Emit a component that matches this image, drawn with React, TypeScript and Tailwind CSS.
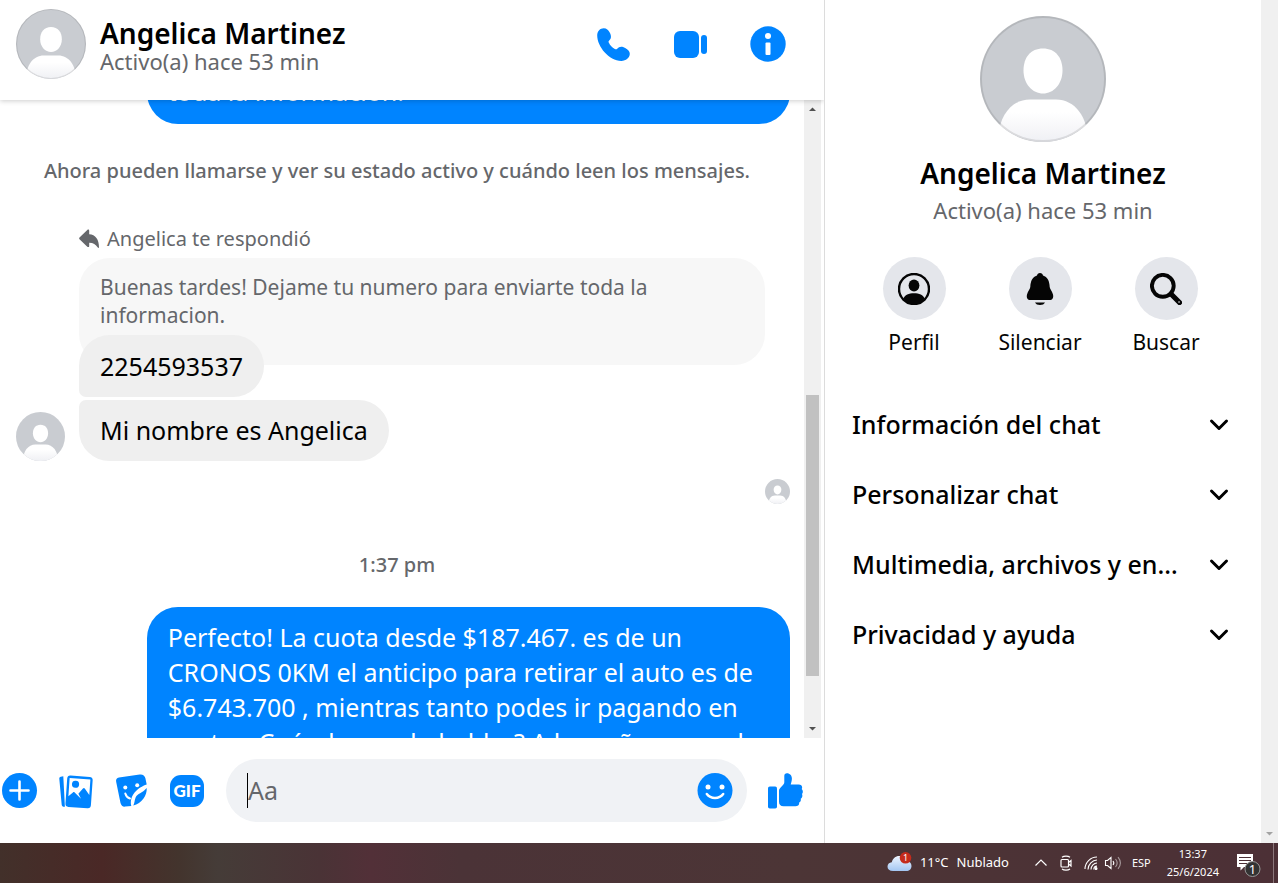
import { useId, type ReactNode } from 'react';

function Avatar({ className, ring = false }: { className: string; ring?: boolean }) {
  const id = useId();
  return (
    <svg viewBox="0 0 126 126" className={className} aria-hidden="true">
      <defs>
        <clipPath id={`${id}-clip`}>
          <circle cx="63" cy="63" r="63" />
        </clipPath>
        <linearGradient id={`${id}-body`} x1="0" y1="0" x2="0" y2="1">
          <stop offset="0.3" stopColor="#ffffff" />
          <stop offset="1" stopColor="#eff0f4" />
        </linearGradient>
      </defs>
      <g clipPath={`url(#${id}-clip)`}>
        <rect width="126" height="126" fill="#c9ccd1" />
        <path d="M63 32.500c12.500 0 19.500 9 19.500 22 0 13.500-9 23-19.500 23s-19.500-9.500-19.500-23c0-13 7-22 19.500-22z" fill="#fff" />
        <path d="M18 126C18 101 31 83.500 50 83.500h26c19 0 32 17.500 32 42.500z" fill={`url(#${id}-body)`} />
      </g>
      {ring && <circle cx="63" cy="63" r="62" fill="none" stroke="#000" strokeOpacity="0.1" strokeWidth="2" />}
    </svg>
  );
}

function Header() {
  return (
    <header className="relative z-10 flex h-[100px] shrink-0 items-start bg-white pr-[38px] pl-4 shadow-[0_1px_5px_rgba(0,0,0,0.2)]">
      <Avatar className="mt-[9px] size-[70px]" ring />
      <div className="mt-4 ml-[14px]">
        <h1 className="text-[28px] leading-[34px] font-semibold text-black">Angelica Martinez</h1>
        <p className="text-[22px] leading-[22px] text-[#65676b]">Activo(a) hace 53 min</p>
      </div>
      <div className="mt-[26px] ml-auto flex gap-[42px] text-[#0084ff]">
        <button type="button" aria-label="Llamar">
          <svg viewBox="0 0 36 36" className="size-9" fill="currentColor">
            <path d="M3.200 9.500C3.200 5 6.300 2.200 9.700 2.200c3 0 4.600 1.700 6 4.300 2 3.700 1.600 6.200-.5 7.900-.8.700-.8 1.400-.3 2.400 1.200 2.700 3.200 4.700 5.900 6.200 1 .5 1.700.5 2.400-.2 1.900-2.200 4.300-3 8-.8 2.700 1.600 4.600 3.100 4.600 5.700 0 3.800-3.800 7.200-8.500 7.200C15 34.900 3.200 20.500 3.200 9.500z" />
          </svg>
        </button>
        <button type="button" aria-label="Videollamada">
          <svg viewBox="0 0 36 36" className="size-9" fill="currentColor">
            <rect x="2" y="5" width="25" height="27" rx="6" />
            <rect x="29" y="9" width="6" height="19" rx="3" />
          </svg>
        </button>
        <button type="button" aria-label="Información">
          <svg viewBox="0 0 36 36" className="size-9">
            <circle cx="18" cy="18" r="17.700" fill="currentColor" />
            <circle cx="18" cy="10" r="3" fill="#fff" />
            <rect x="15.500" y="16.500" width="5" height="12.500" rx="1" fill="#fff" />
          </svg>
        </button>
      </div>
    </header>
  );
}

function SentBubble({ children, className }: { children: ReactNode; className: string }) {
  return (
    <div className={`mr-[14px] ml-auto w-[80%] shrink-0 rounded-[31px] bg-[#0084ff] px-[21px] pt-[13px] pb-[15px] text-[25px] leading-[35px] text-white ${className}`}>
      {children}
    </div>
  );
}

function Messages() {
  return (
    <div className="flex min-h-0 flex-1 overflow-hidden pr-[3px]">
      <div className="flex min-w-0 flex-1 flex-col overflow-hidden">
        <SentBubble className="-mt-[39px]">toda la información.</SentBubble>
        <p className="mt-[33px] pr-[10px] text-center text-[20px] leading-7 font-medium whitespace-nowrap text-[#65676b]">
          Ahora pueden llamarse y ver su estado activo y cuándo leen los mensajes.
        </p>

        <div className="mt-10 mr-[39px] ml-[79px] flex flex-col items-start">
          <p className="flex items-center gap-2 text-[20px] leading-7 text-[#65676b]">
            <svg viewBox="0 0 20 20" className="size-5" fill="currentColor" aria-hidden="true">
              <path d="M.5 8.500 8.300 1c.9-.8 1.900-.4 1.900.8v3.400C16.500 5.500 20 10.500 20 18.300c0 .8-.8.900-1.200.3-2.200-3.300-4.400-4.900-8.600-4.900v3.200c0 1.200-1 1.600-1.900.8L.5 10.200c-.5-.5-.5-1.200 0-1.700z" />
            </svg>
            Angelica te respondió
          </p>
          <div className="mt-[5px] self-stretch rounded-[31px] bg-[#f7f7f7] px-[21px] pt-[15px] pb-9 text-[21px] leading-7 text-[#65676b]">
            Buenas tardes! Dejame tu numero para enviarte toda la
            <br />
            informacion.
          </div>
          <div className="-mt-[30px] rounded-[31px] rounded-bl-[7px] bg-[#efefef] px-[21px] py-[13px] text-[25px] leading-9 text-black">
            2254593537
          </div>
        </div>

        <div className="mt-[3px] ml-4 flex items-end gap-[14px]">
          <Avatar className="size-[49px]" />
          <div className="rounded-[31px] rounded-tl-[7px] bg-[#efefef] px-[21px] py-[13px] text-[25px] leading-[35px] text-black">
            Mi nombre es Angelica
          </div>
        </div>

        <div className="mt-[18px] mr-[14px] flex justify-end">
          <Avatar className="size-[25px]" />
        </div>
        <p className="mt-[47px] pr-[10px] text-center text-[20px] leading-7 font-medium text-[#65676b]">1:37 pm</p>
        <SentBubble className="mt-7">
          Perfecto! La cuota desde $187.467. es de un
          <br />
          CRONOS 0KM el anticipo para retirar el auto es de
          <br />
          $6.743.700 , mientras tanto podes ir pagando en
          <br />
          cuotas. Cuándo puedo hablar? A la mañana puedo
        </SentBubble>
      </div>

      <div className="flex w-[17px] shrink-0 flex-col items-center bg-[#f0f0f0]" aria-hidden="true">
        <svg viewBox="0 0 17 17" className="size-[17px]">
          <path d="M5 11h7L8.500 7.500z" fill="#505050" />
        </svg>
        <div className="w-[13px] grow-[278]" />
        <div className="w-[13px] grow-[281] bg-[#c1c1c1]" />
        <div className="w-[13px] grow-[45]" />
        <svg viewBox="0 0 17 17" className="size-[17px]">
          <path d="M5 6h7L8.500 9.500z" fill="#505050" />
        </svg>
      </div>
    </div>
  );
}

function Composer() {
  return (
    <footer className="flex h-[105px] shrink-0 items-center gap-5 pr-[21px] text-[#0084ff]">
      <div className="flex items-center gap-5 pr-[2px] pl-[2px]">
        <button type="button" aria-label="Más acciones">
          <svg viewBox="0 0 36 36" className="size-9">
            <circle cx="17.500" cy="17.500" r="17.500" fill="currentColor" />
            <path d="M17.500 8.500v18M8.500 17.500h18" stroke="#fff" strokeWidth="2.600" strokeLinecap="round" />
          </svg>
        </button>
        <button type="button" aria-label="Adjuntar foto">
          <svg viewBox="0 0 36 36" className="size-9">
            <path d="M5.300 3.300 2.800 3.700C1.700 3.900 1.200 4.700 1.300 5.800l2.400 26c.1 1.400 1 2.100 3.200 2z" fill="currentColor" />
            <g transform="rotate(4 21 19)">
              <rect x="8.300" y="3.200" width="25.500" height="31.500" rx="3.200" fill="currentColor" />
              <path d="M10.700 5.800h20.800v15.500l-4.800-6c-.7-.8-1.400-.8-2 0l-4.200 5.500 3 4.700-6.800-5.700c-.6-.5-1.200-.4-1.700.1l-4.300 4.100z" fill="#fff" />
              <circle cx="17" cy="11.500" r="3.600" fill="currentColor" />
            </g>
          </svg>
        </button>
        <button type="button" aria-label="Elegir un sticker">
          <svg viewBox="0 0 36 36" className="size-9">
            <path d="M5 4.500 25.700 1.500c3-.4 5 1 5.700 3.700l1.300 6.300C24 14.500 15 22 17.300 33l-6 .6c-2.600.3-4-1-4.800-3.600L2.200 9C1.600 6.500 2.700 4.900 5 4.500z" fill="currentColor" />
            <path d="M32.700 15c.6 7.500-5 15.500-13.400 17.500 1.500-2.500 1-5 2.300-8 2-4.500 6.500-4 11.100-9.500z" fill="currentColor" />
            <circle cx="11.300" cy="14.500" r="2" fill="#fff" />
            <circle cx="23.200" cy="12.300" r="2" fill="#fff" />
            <path d="M11.300 20.500c.7 2.500 2.200 4.300 4.700 5" fill="none" stroke="#fff" strokeWidth="2" strokeLinecap="round" />
          </svg>
        </button>
        <button
          type="button"
          aria-label="Elegir un GIF"
          className="flex h-8 w-[34px] items-center justify-center rounded-[11px] bg-[#0084ff] text-[17px] leading-none font-black text-white [font-family:Lato,sans-serif]"
        >
          GIF
        </button>
      </div>
      <div className="flex h-[63px] min-w-0 flex-1 items-center rounded-full bg-[#f0f2f5] pr-[14px] pl-[21px]">
        <span className="h-[35px] w-px shrink-0 bg-black" aria-hidden="true" />
        <input
          type="text"
          aria-label="Mensaje"
          placeholder="Aa"
          className="h-[35px] min-w-0 flex-1 bg-transparent text-[25px] text-black outline-none placeholder:text-[#65676b]"
        />
        <button type="button" aria-label="Elegir un emoji">
          <svg viewBox="0 0 36 36" className="size-9">
            <circle cx="18" cy="17.500" r="17.500" fill="currentColor" />
            <circle cx="11" cy="14" r="2.500" fill="#fff" />
            <circle cx="25" cy="14" r="2.500" fill="#fff" />
            <path d="M9.800 21c4 5.300 12.400 5.300 16.400 0" fill="none" stroke="#fff" strokeWidth="2.500" strokeLinecap="round" />
          </svg>
        </button>
      </div>
      <button type="button" aria-label="Enviar Me gusta">
        <svg viewBox="0 0 36 36" className="size-9" fill="currentColor">
          <rect x="1" y="13.500" width="9" height="22" rx="1.800" />
          <path d="M12 18c0-1.200.4-2 1.200-2.900l3-3.400c.8-.9 1.100-1.700 1.100-3V3c0-1.900 1-2.800 2.600-2.800 3 0 5 2.300 5 5.400 0 2.200-.6 4-1.200 6h8c2.900 0 4.200 2.300 3 4.500 1.500 1.500 1.500 3.500.3 5 .8 1.800.2 3.600-1.300 4.600.5 1.700-.2 3.200-1.500 3.900.2 2.300-1.500 3.700-3.700 3.700H16.500c-3 0-4.500-1.700-4.500-4.500z" />
        </svg>
      </button>
    </footer>
  );
}

const actions = [
  {
    label: 'Perfil',
    icon: (
      <svg viewBox="0 0 32 32" className="size-8">
        <circle cx="16" cy="16" r="15" fill="none" stroke="currentColor" strokeWidth="2.400" />
        <ellipse cx="16" cy="12.500" rx="5.400" ry="6" fill="currentColor" />
        <path d="M5.500 25.500C6.500 22 11 20.300 16 20.300S25.500 22 26.500 25.500C24 29.500 20 31.500 16 31.500S8 29.500 5.500 25.500z" fill="currentColor" />
      </svg>
    ),
  },
  {
    label: 'Silenciar',
    icon: (
      <svg viewBox="0 0 32 32" className="size-8" fill="currentColor">
        <path d="M16 0c1.700 0 2.700 1 3 2.400 4.500 1.500 6.500 5.500 6.700 11.500.1 2 2.500 4.200 3.300 7.600.8 3.500-.5 5.500-3.500 5.500h-19c-3 0-4.300-2-3.500-5.500.8-3.400 3.200-5.600 3.300-7.600.2-6 2.200-10 6.700-11.500C13.300 1 14.300 0 16 0z" />
        <path d="M11 29.500h10c-.8 1.700-2.700 2.500-5 2.500s-4.200-.8-5-2.500z" />
      </svg>
    ),
  },
  {
    label: 'Buscar',
    icon: (
      <svg viewBox="0 0 32 32" className="size-8" fill="none" stroke="currentColor" strokeLinecap="round">
        <circle cx="12.800" cy="12.800" r="10.900" strokeWidth="3.900" />
        <path d="M21 21l8.500 8.500" strokeWidth="5.200" />
        <path d="M29 29h.1" stroke="#e4e6eb" strokeWidth="1.600" />
      </svg>
    ),
  },
];

const sections = ['Información del chat', 'Personalizar chat', 'Multimedia, archivos y enlaces', 'Privacidad y ayuda'];

function DetailsPanel() {
  return (
    <aside className="flex w-[454px] shrink-0 border-l border-[#dcdcdc]">
      <div className="flex min-w-0 flex-1 flex-col items-center pt-4">
        <Avatar className="size-[126px]" ring />
        <h2 className="mt-[13px] text-[28px] leading-9 font-semibold text-black">Angelica Martinez</h2>
        <p className="mt-[5px] text-[22px] leading-7 text-[#65676b]">Activo(a) hace 53 min</p>
        <div className="mt-[33px] flex gap-[22px] pr-[6px]">
          {actions.map((action) => (
            <button key={action.label} type="button" className="flex w-26 flex-col items-center text-[#050505]">
              <span className="flex size-[63px] items-center justify-center rounded-full bg-[#e4e6eb]">{action.icon}</span>
              <span className="mt-2 text-[21px] leading-7">{action.label}</span>
            </button>
          ))}
        </div>
        <div className="mt-[33px] flex flex-col self-stretch pr-[31px] pl-[27px]">
          {sections.map((section) => (
            <button key={section} type="button" className="flex h-[70px] items-center justify-between text-left text-black">
              <span className="w-[327px] truncate text-[25px] leading-9 font-medium">{section}</span>
              <svg viewBox="0 0 22 22" className="size-[22px] shrink-0" fill="none" stroke="currentColor" strokeWidth="3" strokeLinecap="round" strokeLinejoin="round">
                <path d="M3.500 8l7.500 7.500L18.500 8" />
              </svg>
            </button>
          ))}
        </div>
      </div>
      <div className="flex w-[17px] shrink-0 flex-col justify-end bg-[#f0f0f0]" aria-hidden="true">
        <svg viewBox="0 0 17 17" className="size-[17px]">
          <path d="M5 6h7L8.500 9.500z" fill="#a3a3a3" />
        </svg>
      </div>
    </aside>
  );
}

function Taskbar() {
  return (
    <div className="flex h-10 shrink-0 items-center justify-end bg-linear-[90deg,#42302a_0%,#4a2826_8%,#43342d_14%,#453c38_17%,#4a3336_25%,#523038_29%,#4b3337_36%,#4c3536_62%,#4c3036_100%] text-[11px] text-white">
      <button type="button" className="flex items-center text-[13px]">
        <svg viewBox="0 0 26 22" className="h-[22px] w-[26px]" aria-hidden="true">
          <defs>
            <linearGradient id="cloud" x1="0" y1="0" x2="0" y2="1">
              <stop offset="0" stopColor="#eef5ff" />
              <stop offset="1" stopColor="#a3c6f2" />
            </linearGradient>
          </defs>
          <path d="M6 19c-3.500 0-5.500-1.700-5.500-4.300 0-2.500 1.800-4.200 4.300-4.400C5.600 6.500 8.500 4 12.200 4c3.500 0 6.200 2 7.200 5 3.200.3 5.100 2.200 5.100 5 0 3-2.200 5-5.200 5z" fill="url(#cloud)" />
          <circle cx="18.500" cy="5.800" r="5.800" fill="#c42b1c" />
          <text x="18.500" y="9" fontSize="9" textAnchor="middle" fill="#fff">1</text>
        </svg>
        <span className="ml-[7px]">11°C</span>
        <span className="ml-2">Nublado</span>
      </button>
      <button type="button" aria-label="Mostrar iconos ocultos" className="ml-[25px]">
        <svg viewBox="0 0 14 14" className="size-[14px]" fill="none" stroke="currentColor" strokeWidth="1.200">
          <path d="M1.500 9.500 7 4l5.500 5.500" />
        </svg>
      </button>
      <button type="button" aria-label="Cámara" className="ml-[10px]">
        <svg viewBox="0 0 16 16" className="size-4" fill="none" stroke="currentColor" strokeWidth="1.200">
          <rect x="3" y="4.500" width="7.500" height="7.500" rx="1" />
          <path d="M10.500 7.500 13 5.500v5.500l-2.500-2M4 2.300C6 .8 10 .8 12 2.300M4 14c2 1.500 6 1.500 8 0" />
        </svg>
      </button>
      <button type="button" aria-label="Red" className="ml-[10px]">
        <svg viewBox="0 0 14 14" className="size-[14px]" fill="none" stroke="currentColor" strokeWidth="1.100">
          <path d="M1 13C1 6.500 6.500 1 13 1M4 13.500C4 8.500 8.500 4 13 4M7 13.500C7 10 10 7 13 7" />
          <path d="M9.800 13.500c0-1.900 1.300-3.400 3.200-3.400" />
          <circle cx="12" cy="12.500" r="1" fill="currentColor" />
        </svg>
      </button>
      <button type="button" aria-label="Volumen" className="ml-[6px]">
        <svg viewBox="0 0 18 16" className="h-4 w-[18px]" fill="none" stroke="currentColor" strokeWidth="1.100">
          <path d="M1.500 5.500h2L7 2.500v11l-3.500-3h-2zM9 6c1 1.200 1 2.800 0 4" />
          <path d="M11.500 4c2 2.400 2 5.600 0 8M14 2.200c3 3.600 3 8 0 11.600" strokeOpacity="0.500" />
        </svg>
      </button>
      <button type="button" className="ml-[10px]">ESP</button>
      <button type="button" className="ml-4 flex flex-col items-center leading-[18px]">
        <span>13:37</span>
        <span>25/6/2024</span>
      </button>
      <button type="button" aria-label="Notificaciones" className="ml-[17px]">
        <svg viewBox="0 0 26 28" className="h-7 w-[26px]">
          <path d="M1 5h16v13H8l-3.500 3.500V18H1z" fill="#fff" />
          <path d="M3 8.500h12M3 11.500h12M3 14.500h8" stroke="#4c3036" strokeWidth="1" />
          <circle cx="16.500" cy="20" r="7.500" fill="#333" stroke="#999" strokeWidth="1" />
          <text x="16.500" y="24.500" fontSize="13" textAnchor="middle" fill="#fff">1</text>
        </svg>
      </button>
      <span className="mr-1 ml-[11px] h-10 w-px bg-[#8b777b]" />
    </div>
  );
}

export default function App() {
  return (
    <div className="flex h-screen flex-col overflow-hidden bg-white [font-family:'Noto_Sans',sans-serif]">
      <div className="flex min-h-0 flex-1">
        <main className="flex min-w-0 flex-1 flex-col overflow-hidden">
          <Header />
          <Messages />
          <Composer />
        </main>
        <DetailsPanel />
      </div>
      <Taskbar />
    </div>
  );
}
